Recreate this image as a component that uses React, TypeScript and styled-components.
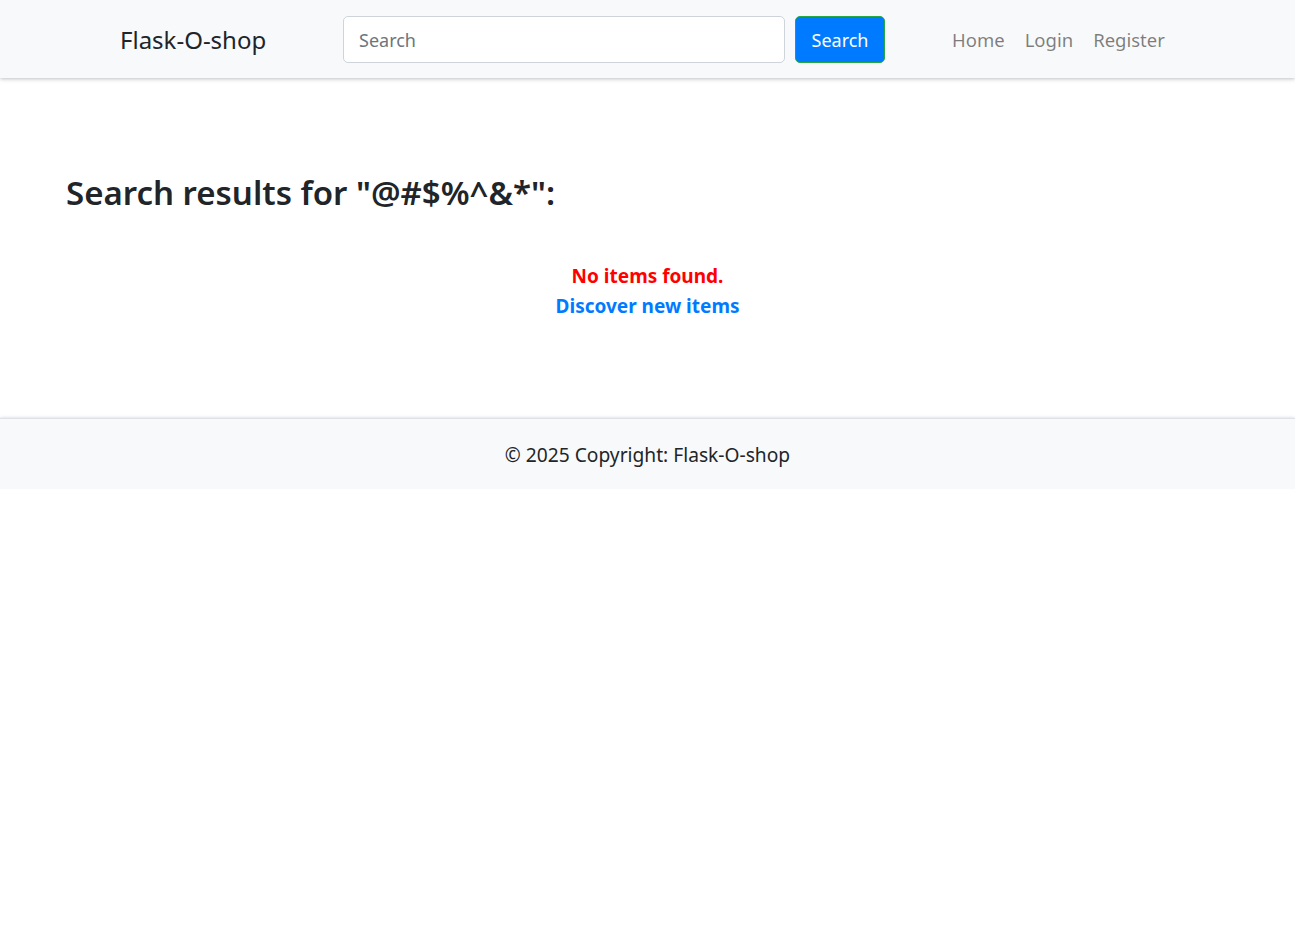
import React from "react";
import styled, { createGlobalStyle } from "styled-components";

const Global = createGlobalStyle`
  html, body { margin: 0; padding: 0; background: #fff; }
  body { font-family: "Noto Sans", "Open Sans", sans-serif; color: #212529; }
  * { box-sizing: border-box; }
`;

const NavBar = styled.nav`
  height: 78px;
  background: #f8f9fa;
  box-shadow: 0 1px 4px rgba(0,0,0,0.25);
  display: flex;
  align-items: center;
  padding-left: 120px;
  position: relative;
  z-index: 1;
`;

const Brand = styled.a`
  font-size: 24px;
  color: #212529;
  text-decoration: none;
  width: 223px;
  white-space: nowrap;
`;

const SearchForm = styled.form`
  display: flex;
  align-items: center;
  gap: 10px;
`;

const SearchInput = styled.input`
  width: 442px;
  height: 47px;
  border: 1px solid #ced4da;
  border-radius: 5px;
  padding: 2px 15px 0;
  font-family: inherit;
  font-size: 18px;
  color: #495057;
  background: #fff;
  &::placeholder { color: #6c757d; }
`;

const SearchButton = styled.button`
  width: 90px;
  height: 47px;
  background: #007bff;
  border: 1px solid #28a745;
  border-radius: 5px;
  color: #fff;
  font-family: inherit;
  font-size: 18px;
  padding-top: 2px;
`;

const NavLinks = styled.ul`
  list-style: none;
  margin: 0 0 0 67px;
  padding: 0;
  display: flex;
  gap: 20px;
`;

const NavLink = styled.a`
  font-size: 18.5px;
  color: rgba(0,0,0,0.5);
  text-decoration: none;
`;

const Main = styled.main`
  height: 340px;
  padding: 95px 66px 0;
`;

const Heading = styled.h2`
  margin: 0;
  font-size: 33px;
  font-weight: 600;
  line-height: 1.2;
`;

const Results = styled.div`
  margin-top: 51px;
  display: flex;
  flex-direction: column;
  align-items: center;
  gap: 5px;
  margin-left: -66px;
  margin-right: -66px;
`;

const Notice = styled.p<{ $tone: string }>`
  margin: 0;
  font-size: 19px;
  font-weight: 700;
  color: ${(p) => p.$tone};
  line-height: 25px;
`;

const Footer = styled.footer`
  height: 71px;
  background: #f8f9fa;
  border-top: 1px solid #dee2e6;
  box-shadow: 0 1px 4px rgba(0,0,0,0.3);
  display: flex;
  align-items: center;
  justify-content: center;
  padding-top: 1px;
  font-size: 19.2px;
  color: #212529;
`;

export default function App() {
  return (
    <>
      <Global />
      <NavBar>
        <Brand href="#">Flask-O-shop</Brand>
        <SearchForm onSubmit={(e) => e.preventDefault()}>
          <SearchInput placeholder="Search" />
          <SearchButton type="submit">Search</SearchButton>
        </SearchForm>
        <NavLinks>
          <li><NavLink href="#">Home</NavLink></li>
          <li><NavLink href="#">Login</NavLink></li>
          <li><NavLink href="#">Register</NavLink></li>
        </NavLinks>
      </NavBar>
      <Main>
        <Heading>Search results for "@#$%^&*":</Heading>
        <Results>
          <Notice $tone="#ff0000">No items found.</Notice>
          <Notice $tone="#007bff">Discover new items</Notice>
        </Results>
      </Main>
      <Footer>© 2025 Copyright: Flask-O-shop</Footer>
    </>
  );
}
